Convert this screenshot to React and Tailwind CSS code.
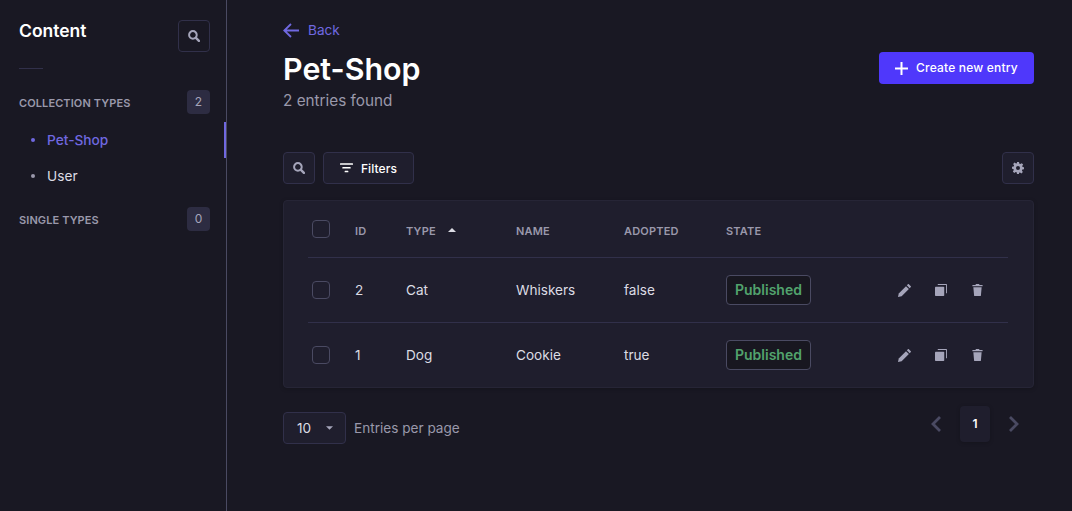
import React from 'react';

const SearchIcon = ({ className }) => (
  <svg viewBox="1 1 22 22" className={className} fill="none" stroke="currentColor">
    <circle cx="10" cy="10" r="7" strokeWidth="3.6" />
    <path d="M15.5 15.5L21 21" strokeWidth="4.5" strokeLinecap="round" />
  </svg>
);

const FilterIcon = () => (
  <svg viewBox="0 0 14 10" className="w-[13px] h-[10px] text-white" fill="currentColor">
    <rect x="0" y="0" width="14" height="1.6" rx="0.4" />
    <rect x="2.5" y="4" width="9" height="1.6" rx="0.4" />
    <rect x="5" y="8" width="4" height="1.6" rx="0.4" />
  </svg>
);

const GearIcon = () => (
  <svg viewBox="0 0 24 24" className="w-3 h-3 text-[#a5a5ba]" fill="currentColor">
    <path
      fillRule="evenodd"
      d="M10 0h4l.7 3.4 1.9.8 2.9-1.9 2.8 2.8-1.9 2.9.8 1.9L24 10.500v4l-3.400.7-.8 1.900 1.900 2.900-2.800 2.800-2.900-1.900-1.900.8L14 24h-4l-.7-3.300-1.900-.8-2.900 1.900-2.800-2.800 1.900-2.900-.8-1.900L0 13.500v-4l3.400-.7.8-1.900-1.900-2.900 2.800-2.800 2.900 1.900 1.900-.8L10 0zm2 8a4 4 0 100 8 4 4 0 000-8z"
    />
  </svg>
);

const PencilIcon = () => (
  <svg viewBox="0 0 14 14" className="w-[13px] h-[13px]" fill="currentColor">
    <path d="M0 14l.8-3.900L8.600 2.300l3.100 3.100-7.800 7.800L0 14z" />
    <path d="M9.500 1.400L10.700.2a.7.7 0 011 0l2.100 2.100a.7.7 0 010 1l-1.200 1.200L9.500 1.400z" />
  </svg>
);

const CopyIcon = () => (
  <svg viewBox="0 0 13 13" className="w-[12px] h-[12px]" fill="currentColor">
    <rect x="0" y="3" width="10" height="10" rx="0.8" />
    <path d="M3 0h9.200a.8.8 0 01.8.8V10h-1V1H3V0z" />
  </svg>
);

const TrashIcon = () => (
  <svg viewBox="0 0 11 13" className="w-[11px] h-[12px]" fill="currentColor">
    <path d="M3.800 0h3.400l.5 1H11v1.400H0V1h3.300l.5-1z" />
    <path d="M1 3.400h9l-.8 9a.7.7 0 01-.7.6h-6a.7.7 0 01-.7-.6l-.8-9z" />
  </svg>
);

const Checkbox = () => (
  <div className="w-[18px] h-[18px] rounded border border-[#4a4a62] bg-[#1f1e2d]" />
);

const HeadCell = ({ className, children }) => (
  <div className={`pt-[5px] text-[11px] font-semibold tracking-[0.2px] text-[#9a98ab] ${className}`}>{children}</div>
);

const Row = ({ id, type, name, adopted, last }) => (
  <div className={`flex items-center text-[13.6px] text-[#dcdce4] ${last ? 'h-[64px]' : 'h-[65px] border-b border-[#31304a]'}`}>
    <div className="w-[47px] pl-[4px]"><Checkbox /></div>
    <div className="w-[51px]">{id}</div>
    <div className="w-[110px]">{type}</div>
    <div className="w-[108px]">{name}</div>
    <div className="w-[102px]">{adopted}</div>
    <div className="w-[172px]">
      <span className="inline-flex items-center h-[30px] px-[8px] rounded border border-[#4a4a62] bg-[#181720] text-sm text-[#52a36d] font-semibold">
        Published
      </span>
    </div>
    <div className="flex items-center text-[#a5a5ba]">
      <div className="w-[37px] flex"><PencilIcon /></div>
      <div className="w-[37px] flex"><CopyIcon /></div>
      <div className="flex"><TrashIcon /></div>
    </div>
  </div>
);

export default function App() {
  return (
    <div className="flex h-[511px] overflow-hidden bg-[#191823] text-white font-['Inter',sans-serif]">
      <aside className="relative w-[227px] shrink-0 border-r border-[#4a4a62] pl-[19px] pr-[16px]">
        <div className="flex items-start justify-between pt-[20px]">
          <h2 className="text-[17.5px] leading-[22px] font-semibold">Content</h2>
          <button className="w-8 h-8 flex items-center justify-center rounded border border-[#31304a] text-[#a5a5ba]">
            <SearchIcon className="w-3 h-3" />
          </button>
        </div>
        <div className="w-6 h-px bg-[#31304a] mt-[16px]" />
        <div className="flex items-center justify-between mt-[21px]">
          <span className="mt-[2px] text-[11px] font-semibold tracking-[0.1px] text-[#9a98ab]">COLLECTION TYPES</span>
          <span className="w-[23px] h-6 flex items-center justify-center rounded bg-[#2d2c42] text-xs text-[#a5a5ba]">2</span>
        </div>
        <nav className="mt-2 text-[13.7px]">
          <div className="flex items-center h-9 pl-[12px] text-[#7068e0] font-medium">
            <span className="w-[4px] h-[4px] rounded-full bg-[#7068e0] mr-[12px]" />
            Pet-Shop
          </div>
          <div className="flex items-center h-9 pl-[12px] text-[#dcdce4]">
            <span className="w-[4px] h-[4px] rounded-full bg-[#9a98ab] mr-[12px]" />
            User
          </div>
        </nav>
        <div className="flex items-center justify-between mt-[13px]">
          <span className="mt-[2px] text-[11px] font-semibold tracking-[0.1px] text-[#9a98ab]">SINGLE TYPES</span>
          <span className="w-[23px] h-6 flex items-center justify-center rounded bg-[#2d2c42] text-xs text-[#a5a5ba]">0</span>
        </div>
        <span className="absolute right-0 top-[122px] w-[2px] h-9 bg-[#7068e0]" />
      </aside>

      <main className="flex-1 pl-[56px] pr-[38px]">
        <div className="flex items-center gap-[9px] pt-[20px] h-[40px] text-[13.6px] text-[#7068e0]">
          <svg viewBox="0 0 16 15" className="w-4 h-[15px]" fill="none" stroke="currentColor" strokeWidth="1.8">
            <path d="M8 1L1.300 7.500 8 14M1.300 7.500H16" />
          </svg>
          <span>Back</span>
        </div>
        <div className="flex items-start justify-between">
          <div>
            <h1 className="text-[30.4px] leading-[40px] font-semibold mt-[9px]">Pet-Shop</h1>
            <p className="text-[15.3px] leading-[20px] text-[#9a98ab] mt-[2px]">2 entries found</p>
          </div>
          <button className="mt-[12px] flex items-center justify-center gap-[8px] w-[155px] h-8 rounded bg-[#4f38fb] text-xs font-medium tracking-[0.2px]">
            <svg viewBox="0 0 13 13" className="w-[13px] h-[13px]" fill="none" stroke="currentColor" strokeWidth="2">
              <path d="M6.500 0v13M0 6.500h13" />
            </svg>
            Create new entry
          </button>
        </div>

        <div className="flex items-center justify-between mt-[41px]">
          <div className="flex items-center gap-2">
            <button className="w-8 h-8 flex items-center justify-center rounded border border-[#31304a] bg-[#1f1e2d] text-[#a5a5ba]">
              <SearchIcon className="w-3 h-3" />
            </button>
            <button className="h-8 w-[91px] flex items-center justify-center gap-[8px] rounded border border-[#31304a] bg-[#1f1e2d] text-xs font-medium tracking-[0.1px]">
              <FilterIcon />
              <span className="mt-[1px]">Filters</span>
            </button>
          </div>
          <button className="w-8 h-8 flex items-center justify-center rounded border border-[#31304a] bg-[#1f1e2d]">
            <GearIcon />
          </button>
        </div>

        <div className="mt-4 rounded border border-[#262536] bg-[#1f1e2d] pl-[24px] pr-[25px] shadow-[0_1px_4px_rgba(0,0,0,0.2)]">
          <div className="flex items-center h-[57px] border-b border-[#31304a]">
            <div className="w-[47px] pl-[4px]"><Checkbox /></div>
            <HeadCell className="w-[51px]">ID</HeadCell>
            <HeadCell className="w-[110px] flex items-center">
              TYPE
              <svg viewBox="0 0 8 4" className="w-2 h-1 ml-[12px] -mt-[3px] text-[#dcdce4]" fill="currentColor">
                <path d="M4 0l4 4H0z" />
              </svg>
            </HeadCell>
            <HeadCell className="w-[108px]">NAME</HeadCell>
            <HeadCell className="w-[102px]">ADOPTED</HeadCell>
            <HeadCell>STATE</HeadCell>
          </div>
          <Row id="2" type="Cat" name="Whiskers" adopted="false" />
          <Row id="1" type="Dog" name="Cookie" adopted="true" last />
        </div>

        <div className="flex items-center justify-between mt-[24px]">
          <div className="flex items-center gap-2">
            <div className="w-[63px] h-[32px] flex items-center justify-between pl-[13px] pr-[12px] rounded border border-[#31304a] bg-[#1f1e2d] text-[13.6px] text-[#dcdce4]">
              10
              <svg viewBox="0 0 8 4" className="w-[7px] h-1 text-[#a5a5ba]" fill="currentColor">
                <path d="M0 0h8L4 4z" />
              </svg>
            </div>
            <span className="text-[13.6px] text-[#9a98ab]">Entries per page</span>
          </div>
          <div className="flex items-center -mt-[8px] mr-[15px]">
            <svg viewBox="0 0 10 16" className="w-[10px] h-4 text-[#4a4a62] mr-[19px]" fill="none" stroke="currentColor" strokeWidth="2.8">
              <path d="M9 1L2 8l7 7" />
            </svg>
            <div className="w-[30px] h-9 flex items-center justify-center rounded bg-[#1f1e2d] text-xs font-semibold shadow-[0_1px_4px_rgba(0,0,0,0.2)]">1</div>
            <svg viewBox="0 0 10 16" className="w-[10px] h-4 text-[#4a4a62] ml-[19px]" fill="none" stroke="currentColor" strokeWidth="2.8">
              <path d="M1 1l7 7-7 7" />
            </svg>
          </div>
        </div>
      </main>
    </div>
  );
}
